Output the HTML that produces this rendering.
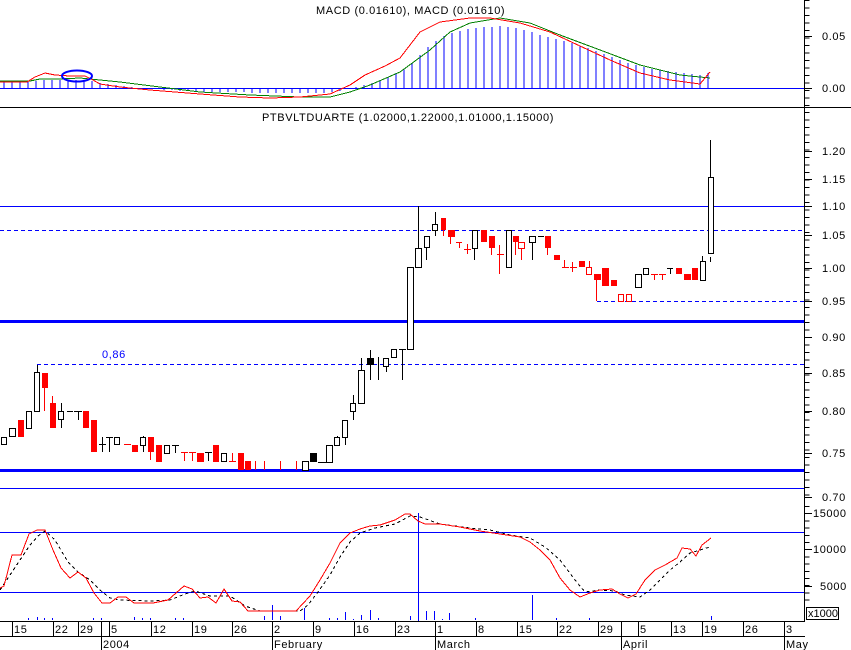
<!DOCTYPE html>
<html><head><meta charset="utf-8"><style>
html,body{margin:0;padding:0;background:#fff;width:851px;height:650px;overflow:hidden}
svg{display:block}
text{font-family:"Liberation Sans",sans-serif;font-size:11px;fill:#000}
.t{letter-spacing:0.6px}
</style></head><body>
<svg width="851" height="650" viewBox="0 0 851 650" shape-rendering="crispEdges">
<line x1="804.5" y1="0" x2="804.5" y2="621" stroke="#000"/>
<line x1="0" y1="107.5" x2="851" y2="107.5" stroke="#000"/>
<line x1="807" y1="0" x2="807" y2="107" stroke="#000" stroke-width="5" stroke-dasharray="1 6.5"/>
<line x1="807" y1="112" x2="807" y2="500" stroke="#000" stroke-width="5" stroke-dasharray="1 6.5"/>
<line x1="807" y1="506" x2="807" y2="603" stroke="#000" stroke-width="5" stroke-dasharray="1 6.2"/>
<g stroke="#000">
<line x1="804" y1="36.5" x2="812" y2="36.5"/><line x1="804" y1="88.5" x2="812" y2="88.5"/>
<line x1="804" y1="151.5" x2="812" y2="151.5"/><line x1="804" y1="179.5" x2="812" y2="179.5"/>
<line x1="804" y1="206.5" x2="812" y2="206.5"/><line x1="804" y1="235.5" x2="812" y2="235.5"/>
<line x1="804" y1="268.5" x2="812" y2="268.5"/><line x1="804" y1="301.5" x2="812" y2="301.5"/>
<line x1="804" y1="337.5" x2="812" y2="337.5"/><line x1="804" y1="373.5" x2="812" y2="373.5"/>
<line x1="804" y1="411.5" x2="812" y2="411.5"/><line x1="804" y1="453.5" x2="812" y2="453.5"/>
<line x1="804" y1="497.5" x2="812" y2="497.5"/><line x1="804" y1="513.5" x2="812" y2="513.5"/>
<line x1="804" y1="549.5" x2="812" y2="549.5"/><line x1="804" y1="586.5" x2="812" y2="586.5"/>
</g>
<g font-size="11" class="t">
<text x="822" y="40">0.05</text><text x="822" y="92">0.00</text>
<text x="822" y="155">1.20</text><text x="822" y="183">1.15</text><text x="822" y="210">1.10</text>
<text x="822" y="239">1.05</text><text x="822" y="272">1.00</text><text x="822" y="305">0.95</text>
<text x="822" y="341">0.90</text><text x="822" y="377">0.85</text><text x="822" y="415">0.80</text>
<text x="822" y="457">0.75</text><text x="822" y="501">0.70</text>
<text x="813" y="517">15000</text><text x="813" y="553">10000</text><text x="820" y="590">5000</text>
</g>
<rect x="806.5" y="607.5" width="32" height="12" fill="none" stroke="#000"/>
<text x="808" y="617" font-size="10">x1000</text>

<text x="316" y="14" class="t">MACD (0.01610), MACD (0.01610)</text>
<line x1="0" y1="88.5" x2="804" y2="88.5" stroke="#00f"/>
<g stroke="#00f">
<path d="M4 88V81M12 88V81M20 88V81M28 88V81M36 88V81M44 88V80M52 88V80M60 88V80M68 88V80M76 88V80M84 88V80M92 88V81M100 88V83M108 88V84M116 88V85M124 88V86M132 88V87M140 88V88M148 88V88M156 88V89M164 88V90M172 88V90M180 88V91M188 88V91M196 88V91M204 88V92M212 88V92M220 88V92M228 88V92M236 88V92M244 88V92M252 88V93M260 88V93M268 88V93M276 88V93M284 88V93M292 88V93M300 88V93M308 88V93M316 88V93M324 88V93M332 88V92M340 88V91M348 88V89M356 88V87M364 88V85M372 88V83M380 88V80M388 88V77M396 88V73M404 88V69M412 88V63M420 88V55M428 88V47M436 88V41M444 88V36M452 88V33M460 88V31M468 88V29M476 88V28M484 88V27M492 88V27M500 88V26M508 88V27M516 88V28M524 88V30M532 88V32M540 88V35M548 88V37M556 88V39M564 88V41M572 88V43M580 88V46M588 88V48M596 88V51M604 88V54M612 88V57M620 88V60M628 88V63M636 88V65M644 88V67M652 88V69M660 88V70M668 88V71M676 88V72M684 88V73M692 88V74M700 88V75M708 88V73"/>
</g>
<polyline fill="none" stroke="#008000" points="0,81 30,81 40,79 60,79 80,78 100,80 120,82 160,87 200,92 250,95 300,97 330,97 350,92 370,85 400,72 430,50 450,32 470,23 500,18 530,23 560,35 600,50 640,65 680,75 710,78"/>
<polyline fill="none" stroke="#f00" points="0,82 27,82 35,77 45,73 55,75 70,76 85,76 93,80 100,84 120,87 150,90 200,94 240,97 270,98 300,97 330,94 350,85 365,75 385,66 400,58 410,45 420,32 440,22 470,18 490,18 520,23 550,32 580,46 610,60 640,73 670,80 700,84 710,72"/>
<ellipse cx="77" cy="76" rx="15" ry="5.5" fill="none" stroke="#00f" stroke-width="2" shape-rendering="auto"/>

<text x="262" y="121" class="t">PTBVLTDUARTE (1.02000,1.22000,1.01000,1.15000)</text>
<g stroke="#00f">
<line x1="0" y1="206.5" x2="804" y2="206.5"/>
<line x1="0" y1="230.5" x2="804" y2="230.5" stroke-dasharray="4 3"/>
<line x1="597" y1="301.5" x2="804" y2="301.5" stroke-dasharray="4 3"/>
<line x1="0" y1="321.5" x2="804" y2="321.5" stroke-width="3"/>
<line x1="37" y1="364.5" x2="804" y2="364.5" stroke-dasharray="4 3"/>
<line x1="0" y1="470.5" x2="804" y2="470.5" stroke-width="3"/>
<line x1="0" y1="488.5" x2="804" y2="488.5"/>
</g>
<line x1="37.5" y1="365" x2="37.5" y2="372" stroke="#000"/>
<text x="102" y="358" class="t" style="fill:#00f">0,86</text>
<g stroke="#000" fill="#fff">
<rect x="1.5" y="437.5" width="5" height="7"/>
<rect x="9.5" y="428.5" width="6" height="8"/>
<rect x="26.5" y="411.5" width="5" height="17"/>
<path d="M37.5 365V372"/><rect x="34.5" y="372.5" width="5" height="39"/>
<path d="M61.5 403V428"/><rect x="58.5" y="411.5" width="5" height="8"/>
<path d="M67 411.5H73M74 411.5H82M78.5 411V420"/>
<path d="M99 444.5H106M102.5 437V452M106 437.5H113M109.5 437V452"/>
<rect x="114.5" y="437.5" width="5" height="7"/>
<path d="M143.5 436V452"/><rect x="140.5" y="437.5" width="5" height="8"/>
<rect x="164.5" y="445.5" width="5" height="8"/>
<path d="M172 445.5H179M175.5 445V453M205 452.5H212M208.5 452V461"/>
<rect x="221.5" y="453.5" width="5" height="8"/>
<rect x="302.5" y="461.5" width="6" height="9"/>
<rect x="310.5" y="453.5" width="6" height="8" fill="#000"/>
<path d="M318 462.5H326"/>
<rect x="326.5" y="445.5" width="6" height="17"/>
<path d="M337.5 436V445"/><rect x="334.5" y="437.5" width="5" height="8"/>
<path d="M345.5 428V445"/><rect x="342.5" y="420.5" width="5" height="17"/>
<path d="M353.5 395V420"/><rect x="350.5" y="403.5" width="5" height="8"/>
<path d="M361.5 358V403"/><rect x="358.5" y="370.5" width="6" height="33"/>
<path d="M370.5 350V380"/><rect x="367.5" y="358.5" width="6" height="6" fill="#000"/>
<path d="M378.5 357V380M386.5 358V372"/><rect x="383.5" y="358.5" width="5" height="8"/>
<rect x="391.5" y="349.5" width="5" height="8"/>
<path d="M399 349.5H406M402.5 349V380"/>
<rect x="407.5" y="267.5" width="6" height="82"/>
<path d="M418.5 206V267"/><rect x="415.5" y="248.5" width="6" height="19"/>
<path d="M426.5 247V260"/><rect x="424.5" y="236.5" width="5" height="11"/>
<path d="M435.5 212V236"/><rect x="432.5" y="224.5" width="5" height="6"/>
<path d="M474.5 248V260"/><rect x="472.5" y="230.5" width="5" height="18"/>
<path d="M508.5 230V267"/><rect x="506.5" y="230.5" width="5" height="37"/>
<path d="M532.5 242V260"/><rect x="529.5" y="236.5" width="6" height="6"/>
<path d="M538 236.5H544"/>
<rect x="635.5" y="274.5" width="6" height="13"/>
<rect x="643.5" y="268.5" width="5" height="6"/>
<path d="M667 268.5H673M670.5 268V274"/>
<path d="M702.5 256V280"/><rect x="700.5" y="261.5" width="5" height="19"/>
<path d="M710.5 140V253M710.5 257V262"/><rect x="708.5" y="177.5" width="5" height="76"/>
</g>
<g fill="#f00" stroke="none">
<rect x="18" y="420" width="6" height="17"/>
<rect x="42" y="373" width="6" height="15"/><rect x="44" y="388" width="1" height="23"/>
<rect x="50" y="403" width="6" height="25"/><rect x="52" y="396" width="1" height="7"/>
<rect x="83" y="411" width="6" height="17"/>
<rect x="91" y="420" width="6" height="32"/>
<rect x="124" y="444" width="7" height="1"/>
<rect x="132" y="445" width="6" height="7"/>
<rect x="148" y="437" width="6" height="15"/><rect x="150" y="452" width="1" height="8"/>
<rect x="156" y="445" width="6" height="17"/>
<rect x="181" y="452" width="7" height="1"/><rect x="184" y="452" width="1" height="9"/>
<rect x="189" y="452" width="7" height="1"/><rect x="192" y="452" width="1" height="9"/>
<rect x="197" y="453" width="7" height="9"/>
<rect x="213" y="445" width="6" height="17"/>
<rect x="229" y="461" width="7" height="1"/><rect x="232" y="453" width="1" height="9"/>
<rect x="238" y="453" width="6" height="17"/>
<rect x="245" y="461" width="6" height="9"/>
<rect x="255" y="461" width="1" height="9"/><rect x="264" y="461" width="1" height="9"/>
<rect x="280" y="461" width="1" height="9"/><rect x="296" y="461" width="1" height="9"/>
<rect x="441" y="218" width="5" height="12"/><rect x="443" y="230" width="1" height="6"/>
<rect x="448" y="230" width="7" height="7"/><rect x="450" y="237" width="1" height="7"/>
<rect x="456" y="242" width="6" height="1"/><rect x="459" y="242" width="1" height="6"/>
<rect x="464" y="249" width="7" height="1"/><rect x="467" y="244" width="1" height="10"/>
<rect x="481" y="230" width="6" height="12"/>
<rect x="489" y="236" width="6" height="12"/><rect x="491" y="248" width="1" height="7"/>
<rect x="497" y="254" width="7" height="1"/><rect x="499" y="245" width="1" height="29"/>
<rect x="513" y="236" width="6" height="6"/><rect x="515" y="242" width="1" height="13"/>
<rect x="545" y="236" width="6" height="12"/><rect x="547" y="248" width="1" height="7"/>
<rect x="554" y="255" width="6" height="5"/>
<rect x="562" y="267" width="7" height="1"/><rect x="564" y="260" width="1" height="7"/>
<rect x="570" y="267" width="7" height="1"/><rect x="572" y="262" width="1" height="10"/>
<rect x="579" y="261" width="6" height="6"/>
<rect x="594" y="274" width="7" height="6"/><rect x="596" y="280" width="1" height="21"/>
<rect x="602" y="268" width="7" height="18"/>
<rect x="611" y="280" width="6" height="6"/>
<rect x="651" y="274" width="7" height="1"/><rect x="654" y="274" width="1" height="6"/>
<rect x="659" y="274" width="7" height="1"/><rect x="662" y="274" width="1" height="6"/>
<rect x="676" y="268" width="6" height="6"/>
<rect x="684" y="274" width="7" height="6"/>
<rect x="692" y="268" width="6" height="12"/>
</g>
<g stroke="#f00" fill="none">
<rect x="586.5" y="267.5" width="5" height="7"/><path d="M589.5 261V267"/>
<rect x="518.5" y="242.5" width="6" height="6"/><path d="M521.5 249V260"/>
<rect x="618.5" y="294.5" width="5" height="7"/>
<rect x="626.5" y="294.5" width="5" height="7"/>
</g>

<g stroke="#00f">
<line x1="0" y1="532.5" x2="804" y2="532.5"/>
<line x1="0" y1="592.5" x2="804" y2="592.5"/>
<line x1="418.5" y1="513" x2="418.5" y2="621"/>
<path d="M28.5 620V618M37.5 620V617M44.5 620V618M52.5 620V618M93.5 620V618M101.5 620V618M134.5 620V617M142.5 620V618M150.5 620V618M175.5 620V618M183.5 620V618M264.5 620V616M272.5 620V605M280.5 620V616M304.5 620V608M329.5 620V618M337.5 620V618M345.5 620V612M353.5 620V619M361.5 620V615M370.5 620V610M378.5 620V618M410.5 620V616M426.5 620V611M434.5 620V611M442.5 620V619M449.5 620V613M475.5 620V618M532.5 620V595M556.5 620V618M589.5 620V618M711.5 620V616"/>
</g>
<polyline fill="none" stroke="#000" stroke-dasharray="3 3" points="0,590 10,575 20,560 30,545 38,536 45,531 55,540 68,562 78,572 90,580 100,590 110,598 120,600 150,601 170,600 185,594 195,591 210,596 230,596 245,606 260,611 300,611 308,605 318,592 330,575 340,557 350,542 360,533 375,528 395,524 410,516 420,517 440,524 470,528 490,530 510,535 530,538 545,547 560,560 575,580 585,592 600,590 615,591 625,595 640,597 650,590 660,580 670,570 680,562 690,553 700,550 710,547"/>
<polyline fill="none" stroke="#f00" points="0,588 4,586 12,555 21,555 29,534 37,530 45,530 53,550 61,568 70,578 78,572 86,578 94,593 102,603 110,603 118,597 126,597 134,603 153,603 168,600 176,593 184,586 192,589 200,598 208,597 216,603 224,589 232,601 240,602 248,611 296,611 310,596 320,580 330,563 340,543 350,533 360,529 370,526 380,525 395,520 405,514 410,514 418,521 425,524 440,524 460,527 480,531 500,534 520,537 530,542 540,550 550,560 560,578 570,590 580,597 590,593 600,590 612,589 620,594 628,598 636,594 645,580 655,570 665,565 677,558 682,548 690,549 696,556 702,545 711,538"/>

<g stroke="#000">
<line x1="0" y1="621.5" x2="805" y2="621.5"/>
<line x1="0" y1="636.5" x2="805" y2="636.5"/>
<path d="M12.5 621V636M53.5 621V636M78.5 621V636M109.5 621V636M151.5 621V636M192.5 621V636M232.5 621V636M313.5 621V636M354.5 621V636M395.5 621V636M476.5 621V636M517.5 621V636M557.5 621V636M598.5 621V636M638.5 621V636M671.5 621V636M702.5 621V636M743.5 621V636"/>
<path d="M101.5 621V650M272.5 621V650M435.5 621V650M621.5 621V650M784.5 621V650"/>
</g>
<g font-size="11" class="t">
<text x="14" y="633">15</text><text x="55" y="633">22</text><text x="80" y="633">29</text>
<text x="111" y="633">5</text><text x="153" y="633">12</text><text x="194" y="633">19</text>
<text x="234" y="633">26</text><text x="274" y="633">2</text><text x="315" y="633">9</text>
<text x="356" y="633">16</text><text x="397" y="633">23</text><text x="437" y="633">1</text>
<text x="478" y="633">8</text><text x="519" y="633">15</text><text x="559" y="633">22</text>
<text x="600" y="633">29</text><text x="640" y="633">5</text><text x="673" y="633">13</text>
<text x="704" y="633">19</text><text x="745" y="633">26</text><text x="786" y="633">3</text>
<text x="103" y="648">2004</text><text x="274" y="648">February</text><text x="437" y="648">March</text>
<text x="623" y="648">April</text><text x="786" y="648">May</text>
</g>
</svg>
</body></html>
